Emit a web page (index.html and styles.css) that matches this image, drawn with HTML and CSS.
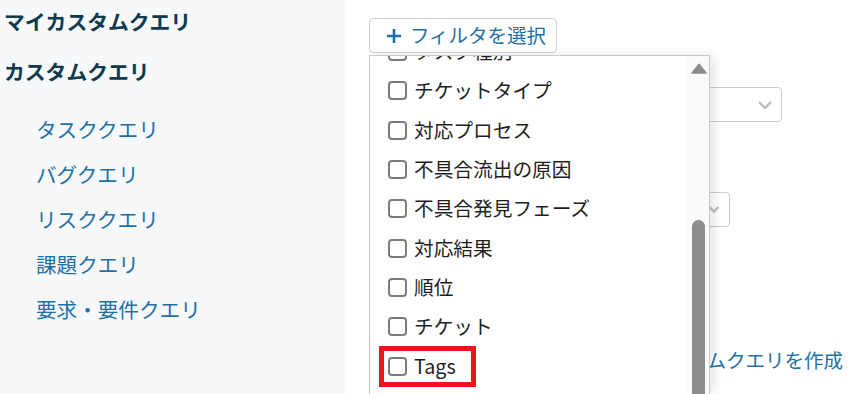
FILE: index.html
```html
<!DOCTYPE html>
<html lang="ja">
<head>
<meta charset="utf-8">
<title>カスタムクエリ</title>
<link rel="stylesheet" href="styles.css">
</head>
<body>
<div class="page">
  <aside class="sidebar">
    <h2 class="side-heading">マイカスタムクエリ</h2>
    <h2 class="side-heading second">カスタムクエリ</h2>
    <ul class="side-links">
      <li><a href="#">タスククエリ</a></li>
      <li><a href="#">バグクエリ</a></li>
      <li><a href="#">リスククエリ</a></li>
      <li><a href="#">課題クエリ</a></li>
      <li><a href="#">要求・要件クエリ</a></li>
    </ul>
  </aside>
  <main class="main">
    <div class="picker">
      <button class="add-filter" type="button">
        <svg class="plus" width="16" height="16" viewBox="0 0 16 16"><path d="M8 1v14M1 8h14" stroke="#1f6fa6" stroke-width="2.6" fill="none"/></svg>
        <span>フィルタを選択</span>
      </button>
      <div class="dropdown">
        <ul class="options">
          <li class="option"><span class="cb"></span><span>タスク種別</span></li>
          <li class="option"><span class="cb"></span><span>チケットタイプ</span></li>
          <li class="option"><span class="cb"></span><span>対応プロセス</span></li>
          <li class="option"><span class="cb"></span><span>不具合流出の原因</span></li>
          <li class="option"><span class="cb"></span><span>不具合発見フェーズ</span></li>
          <li class="option"><span class="cb"></span><span>対応結果</span></li>
          <li class="option"><span class="cb"></span><span>順位</span></li>
          <li class="option"><span class="cb"></span><span>チケット</span></li>
          <li class="option marked"><span class="cb"></span><span>Tags</span></li>
        </ul>
        <div class="scrollbar">
          <svg class="arrow" width="16" height="11" viewBox="0 0 16 11"><path d="M8 1.2L15 10H1z" fill="#8a8a8a" stroke="#8a8a8a" stroke-width="1.4" stroke-linejoin="round"/></svg>
          <div class="thumb"></div>
        </div>
      </div>
    </div>
    <div class="select wide">
      <svg class="chev" width="16" height="10" viewBox="0 0 16 10"><path d="M2 2l6 6 6-6" stroke="#bdbdbd" stroke-width="2.4" fill="none"/></svg>
    </div>
    <div class="field-gap"></div>
    <div class="select narrow">
      <svg class="chev" width="12" height="9" viewBox="0 0 12 9"><path d="M1.5 2l4.5 4.5 4.5-4.5" stroke="#bdbdbd" stroke-width="2.4" fill="none"/></svg>
    </div>
    <div class="create-row"><a class="create" href="#">カスタムクエリを作成</a></div>
  </main>
</div>
</body>
</html>
```

FILE: styles.css
```css
html, body {
  margin: 0;
  padding: 0;
  height: 100%;
  overflow: hidden;
  background: #ffffff;
}
body {
  font-family: "Noto Sans CJK JP", "Noto Sans", sans-serif;
  color: #222222;
}
.page {
  display: flex;
  height: 394px;
  overflow: hidden;
}
.sidebar {
  width: 345px;
  flex: none;
  background: #f6f8fa;
  padding: 6px 0 0 4px;
  box-sizing: border-box;
}
.side-heading {
  margin: 0;
  font-size: 20.8px;
  line-height: 30px;
  font-weight: 700;
  color: #0f3a4d;
}
.side-heading.second {
  margin-top: 20px;
}
.side-links {
  list-style: none;
  margin: 21px 0 0 0;
  padding: 0 0 0 32px;
}
.side-links li {
  line-height: 45px;
  font-size: 20.6px;
}
.side-links a {
  color: #1f6fa6;
  text-decoration: none;
}
.main {
  flex: 1;
  padding: 18px 0 0 24px;
  position: relative;
}
.picker {
  position: relative;
  z-index: 2;
}
.add-filter {
  display: inline-flex;
  align-items: center;
  gap: 8px;
  height: 35px;
  width: 188px;
  box-sizing: border-box;
  padding: 0 0 0 16px;
  border: 1px solid #cfcfcf;
  border-radius: 4px;
  background: #ffffff;
  color: #1f6fa6;
  font-family: "Noto Sans CJK JP", sans-serif;
  font-size: 19.5px;
  line-height: 1;
}
.add-filter span {
  position: relative;
  top: -1px;
}
.dropdown {
  position: absolute;
  left: 0;
  top: 37px;
  width: 341px;
  height: 339px;
  box-sizing: border-box;
  border: 1px solid #c9c9c9;
  border-bottom: none;
  background: #ffffff;
  overflow: hidden;
  box-shadow: 5px 0 9px rgba(0, 0, 0, 0.09);
}
.options {
  list-style: none;
  margin: -25px 0 0 0;
  padding: 0;
}
.option {
  position: relative;
  display: flex;
  align-items: center;
  gap: 7px;
  height: 39.3px;
  padding-left: 18px;
  font-size: 19.7px;
  color: #1e1e1e;
}
.cb {
  width: 19px;
  height: 19px;
  box-sizing: border-box;
  border: 2px solid #7c7c7c;
  border-radius: 4px;
  background: #ffffff;
  position: relative;
  top: 1px;
}
.option.marked::after {
  content: "";
  position: absolute;
  left: 9px;
  top: 1px;
  width: 97px;
  height: 41px;
  box-sizing: border-box;
  border: 5px solid #e8151f;
}
.scrollbar {
  position: absolute;
  top: 0;
  right: 0;
  bottom: 0;
  width: 22px;
  background: #fafafa;
}
.arrow {
  position: absolute;
  left: 4px;
  top: 7px;
}
.thumb {
  position: absolute;
  left: 5px;
  top: 164px;
  width: 13px;
  height: 400px;
  border-radius: 7px;
  background: #8c8c8c;
}
.select {
  display: flex;
  align-items: center;
  justify-content: flex-end;
  box-sizing: border-box;
  height: 35px;
  border: 1px solid #cccccc;
  border-radius: 4px;
  padding: 0 8px 0 12px;
}
.select.wide {
  width: 413px;
  margin-top: 34px;
}
.select.narrow {
  width: 361px;
  padding-right: 9px;
}
.chev {
  flex: none;
}
.field-gap {
  height: 70px;
}
.create-row {
  margin-top: 118px;
  padding-left: 279px;
  line-height: 30px;
}
.create {
  font-size: 19.5px;
  color: #1f6fa6;
  text-decoration: none;
}
```
